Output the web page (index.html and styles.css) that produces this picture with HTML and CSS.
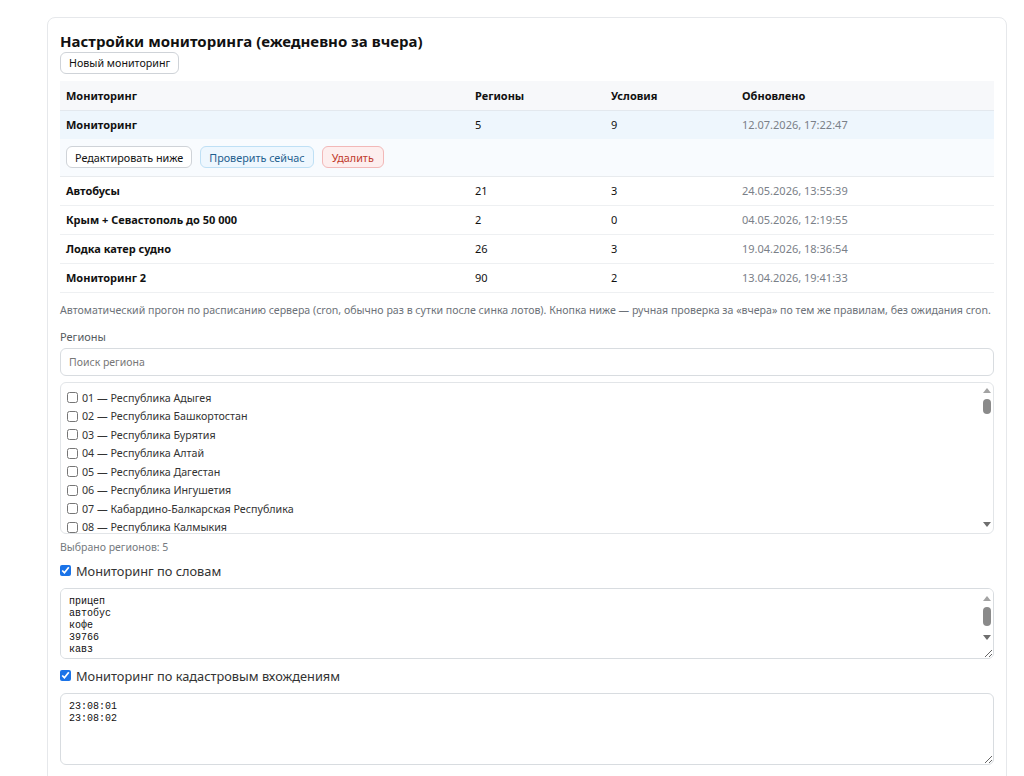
FILE: index.html
```
<!DOCTYPE html>
<html lang="ru">
<head>
<meta charset="utf-8">
<title>Настройки мониторинга</title>
<link rel="stylesheet" href="styles.css">
</head>
<body>
<div class="page">
  <div class="card">
    <h2 class="title">Настройки мониторинга (ежедневно за вчера)</h2>
    <button class="btn">Новый мониторинг</button>
    <table class="tbl">
      <colgroup>
        <col class="c1"><col class="c2"><col class="c3"><col class="c4">
      </colgroup>
      <thead>
        <tr><th>Мониторинг</th><th>Регионы</th><th>Условия</th><th>Обновлено</th></tr>
      </thead>
      <tbody>
        <tr class="sel"><td class="name">Мониторинг</td><td>5</td><td>9</td><td class="date">12.07.2026, 17:22:47</td></tr>
        <tr class="actions"><td colspan="4">
          <div class="btns">
            <button class="btn">Редактировать ниже</button>
            <button class="btn btn-blue">Проверить сейчас</button>
            <button class="btn btn-red">Удалить</button>
          </div>
        </td></tr>
        <tr><td class="name">Автобусы</td><td>21</td><td>3</td><td class="date">24.05.2026, 13:55:39</td></tr>
        <tr><td class="name">Крым + Севастополь до 50 000</td><td>2</td><td>0</td><td class="date">04.05.2026, 12:19:55</td></tr>
        <tr><td class="name">Лодка катер судно</td><td>26</td><td>3</td><td class="date">19.04.2026, 18:36:54</td></tr>
        <tr><td class="name">Мониторинг 2</td><td>90</td><td>2</td><td class="date">13.04.2026, 19:41:33</td></tr>
      </tbody>
    </table>
    <p class="note">Автоматический прогон по расписанию сервера (cron, обычно раз в сутки после синка лотов). Кнопка ниже — ручная проверка за «вчера» по тем же правилам, без ожидания cron.</p>
    <div class="label">Регионы</div>
    <input class="input" type="text" placeholder="Поиск региона">
    <div class="scrollwrap regions-wrap">
      <div class="regions">
        <label class="reg"><input type="checkbox"> 01 — Республика Адыгея</label>
        <label class="reg"><input type="checkbox"> 02 — Республика Башкортостан</label>
        <label class="reg"><input type="checkbox"> 03 — Республика Бурятия</label>
        <label class="reg"><input type="checkbox"> 04 — Республика Алтай</label>
        <label class="reg"><input type="checkbox"> 05 — Республика Дагестан</label>
        <label class="reg"><input type="checkbox"> 06 — Республика Ингушетия</label>
        <label class="reg"><input type="checkbox"> 07 — Кабардино-Балкарская Республика</label>
        <label class="reg"><input type="checkbox"> 08 — Республика Калмыкия</label>
        <label class="reg"><input type="checkbox"> 09 — Карачаево-Черкесская Республика</label>
        <label class="reg"><input type="checkbox"> 10 — Республика Карелия</label>
        <label class="reg"><input type="checkbox"> 11 — Республика Коми</label>
        <label class="reg"><input type="checkbox"> 12 — Республика Марий Эл</label>
        <label class="reg"><input type="checkbox"> 13 — Республика Мордовия</label>
        <label class="reg"><input type="checkbox"> 14 — Республика Саха (Якутия)</label>
        <label class="reg"><input type="checkbox"> 15 — Республика Северная Осетия — Алания</label>
        <label class="reg"><input type="checkbox"> 16 — Республика Татарстан</label>
        <label class="reg"><input type="checkbox"> 17 — Республика Тыва</label>
        <label class="reg"><input type="checkbox"> 18 — Удмуртская Республика</label>
        <label class="reg"><input type="checkbox"> 19 — Республика Хакасия</label>
        <label class="reg"><input type="checkbox"> 20 — Чеченская Республика</label>
        <label class="reg"><input type="checkbox"> 21 — Чувашская Республика</label>
        <label class="reg"><input type="checkbox"> 22 — Алтайский край</label>
        <label class="reg"><input type="checkbox"> 23 — Краснодарский край</label>
        <label class="reg"><input type="checkbox"> 24 — Красноярский край</label>
        <label class="reg"><input type="checkbox"> 25 — Приморский край</label>
        <label class="reg"><input type="checkbox"> 26 — Ставропольский край</label>
        <label class="reg"><input type="checkbox"> 27 — Хабаровский край</label>
        <label class="reg"><input type="checkbox"> 28 — Амурская область</label>
        <label class="reg"><input type="checkbox"> 29 — Архангельская область</label>
        <label class="reg"><input type="checkbox"> 30 — Астраханская область</label>
        <label class="reg"><input type="checkbox"> 31 — Белгородская область</label>
        <label class="reg"><input type="checkbox"> 32 — Брянская область</label>
        <label class="reg"><input type="checkbox"> 33 — Владимирская область</label>
        <label class="reg"><input type="checkbox"> 34 — Волгоградская область</label>
        <label class="reg"><input type="checkbox"> 35 — Вологодская область</label>
        <label class="reg"><input type="checkbox"> 36 — Воронежская область</label>
        <label class="reg"><input type="checkbox"> 37 — Ивановская область</label>
        <label class="reg"><input type="checkbox"> 38 — Иркутская область</label>
        <label class="reg"><input type="checkbox"> 39 — Калининградская область</label>
        <label class="reg"><input type="checkbox"> 40 — Калужская область</label>
      </div>
      <div class="sb sb-regions" aria-hidden="true">
        <span class="arr arr-up"></span>
        <span class="thumb"></span>
        <span class="sb-fill"></span>
        <span class="arr arr-down"></span>
      </div>
    </div>
    <div class="count">Выбрано регионов: 5</div>
    <label class="chk"><input type="checkbox" checked> Мониторинг по словам</label>
    <div class="scrollwrap ta-wrap">
      <textarea class="ta ta-words">прицеп
автобус
кофе
39766
кавз
маз
газель
трактор
экскаватор
погрузчик</textarea>
      <div class="sb sb-words" aria-hidden="true">
        <span class="arr arr-up"></span>
        <span class="thumb thumb-words"></span>
        <span class="sb-fill"></span>
        <span class="arr arr-down"></span>
      </div>
    </div>
    <label class="chk chk-cad"><input type="checkbox" checked> Мониторинг по кадастровым вхождениям</label>
    <div class="ta-wrap">
      <textarea class="ta ta-cad">23:08:01
23:08:02</textarea>
    </div>
  </div>
</div>
</body>
</html>
```
FILE: styles.css
```
* { box-sizing: border-box; }
html, body { margin: 0; padding: 0; background: #fff; }
body {
  font-family: "Noto Sans", "Open Sans", sans-serif;
  color: #111;
  font-size: 12px;
}
.page {
  padding: 17px 17px 0 47px;
}
.card {
  border: 1px solid #e6e8eb;
  border-radius: 8px;
  padding: 12px 12px 20px 12px;
  display: flex;
  flex-direction: column;
  align-items: flex-start;
}
.title {
  margin: 0;
  font-size: 15px;
  font-weight: 700;
  line-height: 22px;
  color: #111;
}
.btn {
  font-family: inherit;
  font-size: 10.7px;
  line-height: 15px;
  padding: 2px 8px;
  height: 22px;
  border: 1px solid #cfd3d8;
  border-radius: 6px;
  background: #fff;
  color: #111;
  cursor: pointer;
}
.btn-blue {
  background: #eef7fe;
  border-color: #bfe0f5;
  color: #1f5f8f;
}
.btn-red {
  background: #fdeeee;
  border-color: #f2b8b8;
  color: #c0392b;
}
.tbl {
  width: 100%;
  border-collapse: collapse;
  margin-top: 7px;
  table-layout: fixed;
  font-size: 11px;
}
.c1 { width: 409px; }
.c2 { width: 136px; }
.c3 { width: 131px; }
.tbl th {
  text-align: left;
  font-weight: 700;
  background: #f7f8fa;
  height: 29px;
  padding: 0 6px;
  border-bottom: 1px solid #e3e8ee;
}
.tbl td {
  height: 29px;
  padding: 0 6px;
  border-bottom: 1px solid #eef0f2;
}
.tbl td.name { font-weight: 700; }
.tbl td.date { color: #7a8088; }
.tbl tr.sel td { background: #eef6fd; border-bottom: none; }
.tbl tr.actions td {
  background: #f8fbfe;
  height: 37px;
  padding: 0 6px;
  border-bottom: 1px solid #e8ebee;
}
.btns { display: flex; gap: 8px; }
.btns .btn { font-size: 10.8px; padding: 2px 8px; }
.btns .btn-red { padding: 2px 9px; }
.note {
  margin: 10px 0 0 0;
  font-size: 10.6px;
  color: #6c7178;
  line-height: 15px;
}
.label {
  margin-top: 11px;
  font-size: 11px;
  color: #555a60;
  line-height: 16px;
}
.input {
  margin-top: 3px;
  width: 100%;
  height: 28px;
  border: 1px solid #d8dce0;
  border-radius: 6px;
  padding: 0 8px;
  font-family: inherit;
  font-size: 10.5px;
}
.input::placeholder { color: #777; }

.scrollwrap { position: relative; width: 100%; }
.ta-wrap { width: 100%; margin-top: 8px; }
.regions-wrap { margin-top: 6px; }
.regions {
  width: 100%;
  height: 152px;
  overflow-y: auto;
  scrollbar-width: none;
  border: 1px solid #e2e5e8;
  border-radius: 6px;
  padding: 6px 6px 4px 6px;
}
.reg {
  display: flex;
  align-items: center;
  gap: 4px;
  height: 18.5px;
  font-size: 10.7px;
  color: #333;
}
.reg input { margin: 0; width: 11px; height: 11px; }
.count {
  margin-top: 6px;
  font-size: 10.5px;
  color: #757a80;
  line-height: 15px;
}
.chk {
  display: flex;
  align-items: center;
  gap: 5px;
  margin-top: 7px;
  font-size: 12.8px;
  color: #333;
  line-height: 18px;
}
.chk-cad { margin-top: 8px; }
.chk input { margin: 0; width: 11px; height: 11px; accent-color: #1a73e8; }
.ta {
  display: block;
  width: 100%;
  border: 1px solid #d8dce0;
  border-radius: 6px;
  padding: 7px 8px;
  font-family: "Liberation Mono", "DejaVu Sans Mono", monospace;
  font-size: 10px;
  line-height: 12px;
  color: #111;
  resize: vertical;
}
.ta-words { height: 71px; overflow-y: auto; scrollbar-width: none; }
.ta-cad { height: 72px; }

/* drawn scrollbar overlay */
.sb {
  position: absolute;
  right: 2px;
  width: 11px;
  display: flex;
  flex-direction: column;
  align-items: center;
  pointer-events: none;
}
.sb-regions { top: 3px; bottom: 4px; }
.sb-words { top: 5px; bottom: 16px; }
.arr {
  width: 0;
  height: 0;
  border-left: 4px solid transparent;
  border-right: 4px solid transparent;
  margin: 3px 0;
}
.arr-up { border-bottom: 5px solid #a3a3a3; }
.arr-down { border-top: 5px solid #6e6e6e; }
.thumb {
  width: 8px;
  height: 15px;
  border-radius: 4px;
  background: #8a8a8a;
  margin-top: 3px;
}
.thumb-words { height: 19px; }
.sb-fill { flex: 1; }
```
